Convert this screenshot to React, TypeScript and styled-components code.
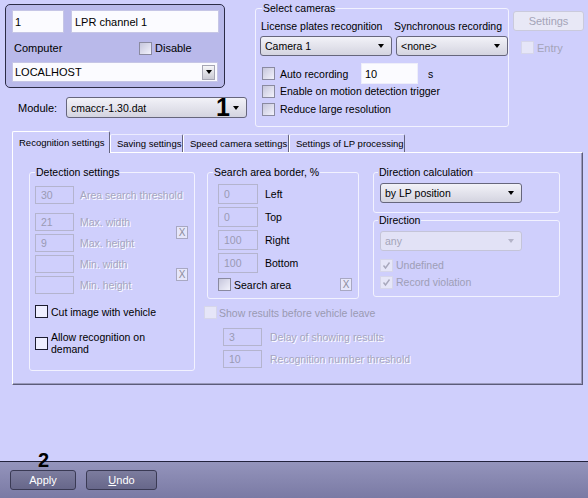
import React from "react";
import styled, { createGlobalStyle } from "styled-components";

const GlobalStyle = createGlobalStyle`
  html, body { margin: 0; padding: 0; }
  body {
    background: #cfcffc;
    font-family: "Liberation Sans", Arial, sans-serif;
    font-size: 10.5px;
    color: #000;
  }
`;

const Page = styled.div`
  width: 588px;
  height: 498px;
  display: flex;
  flex-direction: column;
  background: #cfcffc;
  overflow: hidden;
`;

const TopArea = styled.div`
  display: flex;
  height: 128px;
  flex-shrink: 0;
`;

const LeftCol = styled.div`
  width: 250px;
  box-sizing: border-box;
  padding: 4px 0 0 5px;
  display: flex;
  flex-direction: column;
`;

const IdentityPanel = styled.div`
  width: 220px;
  height: 84px;
  box-sizing: border-box;
  border: 1px solid #2c2c46;
  border-radius: 5px;
  background: #b9b9ea;
  padding: 5px 6px 0 6px;
  display: flex;
  flex-direction: column;
`;

const Row = styled.div<{ $mt?: number; $h?: number; $pl?: number; $gap?: number }>`
  display: flex;
  align-items: center;
  margin-top: ${(p) => p.$mt ?? 0}px;
  ${(p) => (p.$h ? `height: ${p.$h}px;` : "")}
  padding-left: ${(p) => p.$pl ?? 0}px;
  gap: ${(p) => p.$gap ?? 0}px;
`;

const TextField = styled.div<{ $w: number; $h: number; $pl?: number; $border?: string }>`
  width: ${(p) => p.$w}px;
  height: ${(p) => p.$h}px;
  box-sizing: border-box;
  background: #fbfbff;
  border: 1px solid ${(p) => p.$border ?? "#c6c6e6"};
  padding-left: ${(p) => p.$pl ?? 3}px;
  font-size: 11px;
  display: flex;
  align-items: center;
  flex-shrink: 0;
`;

const Label = styled.span<{ $w?: number; $ml?: number; $color?: string; $size?: number }>`
  ${(p) => (p.$w ? `width: ${p.$w}px; flex-shrink: 0;` : "")}
  margin-left: ${(p) => p.$ml ?? 0}px;
  color: ${(p) => p.$color ?? "#000"};
  font-size: ${(p) => p.$size ?? 10.5}px;
  white-space: nowrap;
  line-height: 12px;
`;

const DisabledLabel = styled.span<{ $ml?: number }>`
  margin-left: ${(p) => p.$ml ?? 6}px;
  color: #a6a6c0;
  text-shadow: 1px 1px 0 #ffffff;
  white-space: nowrap;
  line-height: 12px;
`;

const WrapLabel = styled.span`
  margin-left: 3px;
  line-height: 12px;
`;

const ClassicCombo = styled.div`
  width: 206px;
  height: 20px;
  box-sizing: border-box;
  background: #fbfbff;
  border: 1px solid #c6c6e6;
  display: flex;
  align-items: center;
  padding: 0 2px 0 2px;
  font-size: 11px;
`;

const ClassicDropButton = styled.div`
  margin-left: auto;
  width: 13px;
  height: 15px;
  box-sizing: border-box;
  border: 1px solid #a6a6b4;
  background: linear-gradient(#f6f6f8, #cacad4);
  display: flex;
  align-items: center;
  justify-content: center;
`;

const Arrow = styled.span<{ $color?: string }>`
  width: 0;
  height: 0;
  border-left: 3.5px solid transparent;
  border-right: 3.5px solid transparent;
  border-top: 4px solid ${(p) => p.$color ?? "#000"};
  flex-shrink: 0;
`;

const Combo = styled.div<{ $w: number; $h?: number; $disabled?: boolean }>`
  width: ${(p) => p.$w}px;
  height: ${(p) => p.$h ?? 20}px;
  box-sizing: border-box;
  border: 1px solid ${(p) => (p.$disabled ? "#c4c4d8" : "#66667c")};
  border-radius: 3px;
  background: ${(p) =>
    p.$disabled ? "#e2e2f6" : "linear-gradient(#f2f2f8, #d4d4e0)"};
  color: ${(p) => (p.$disabled ? "#a4a4b8" : "#000")};
  display: flex;
  align-items: center;
  padding: 0 7px 0 4px;
  font-size: 10.5px;
  flex-shrink: 0;
  overflow: visible;
`;

const ComboText = styled.span`
  flex: 1;
  white-space: nowrap;
`;

const BigMark = styled.span`
  font-weight: bold;
  font-size: 25px;
  line-height: 19px;
  margin-right: 3px;
`;

const Check = styled.span<{ $variant: "dark" | "gray" | "off" }>`
  width: 13px;
  height: 13px;
  box-sizing: border-box;
  flex-shrink: 0;
  display: inline-flex;
  align-items: center;
  justify-content: center;
  border: 1px solid
    ${(p) => (p.$variant === "dark" ? "#1c1c30" : p.$variant === "gray" ? "#8a8aa0" : "#d6d6ea")};
  background: ${(p) =>
    p.$variant === "dark"
      ? "#eeeeff"
      : p.$variant === "gray"
      ? "linear-gradient(135deg, #c6c6dc, #f2f2fc)"
      : "#e6e6f8"};
`;

const Fieldset = styled.fieldset<{
  $w: number;
  $pl: number;
  $pr?: number;
  $pb?: number;
  $h?: number;
  $mt?: number;
  $ml?: number;
}>`
  box-sizing: border-box;
  width: ${(p) => p.$w}px;
  ${(p) => (p.$h ? `height: ${p.$h}px;` : "")}
  margin: ${(p) => p.$mt ?? 0}px 0 0 ${(p) => p.$ml ?? 0}px;
  padding: 0 ${(p) => p.$pr ?? 4}px ${(p) => p.$pb ?? 6}px ${(p) => p.$pl}px;
  border: 1px solid #f2f2ff;
  border-radius: 3px;
  min-width: 0;
  display: flex;
  flex-direction: column;
  flex-shrink: 0;
`;

const Legend = styled.legend<{ $ml?: number }>`
  padding: 0 1px;
  margin-left: ${(p) => p.$ml ?? 0}px;
  font-size: 10.5px;
  line-height: 12px;
`;

const CameraGrid = styled.div<{ $mt: number }>`
  display: grid;
  grid-template-columns: 132px 112px;
  column-gap: 4px;
  margin-top: ${(p) => p.$mt}px;
`;

const GridLabel = styled.span<{ $ml: number }>`
  margin-left: ${(p) => p.$ml}px;
  white-space: nowrap;
  line-height: 12px;
`;

const RightCol = styled.div`
  margin-left: 4px;
  display: flex;
  flex-direction: column;
`;

const FlatButton = styled.div`
  margin-top: 11px;
  width: 71px;
  height: 20px;
  box-sizing: border-box;
  border: 1px solid #cacadc;
  border-radius: 3px;
  background: #e8e8f6;
  color: #a4a4b8;
  font-size: 11px;
  display: flex;
  align-items: center;
  justify-content: center;
`;

const TabsArea = styled.div`
  padding-left: 12px;
  margin-right: 5px;
  display: flex;
  flex-direction: column;
`;

const TabStrip = styled.div`
  display: flex;
  align-items: flex-end;
  height: 24px;
  position: relative;
  z-index: 1;
`;

const Tab = styled.div<{ $active?: boolean; $w: number }>`
  box-sizing: border-box;
  width: ${(p) => p.$w}px;
  height: ${(p) => (p.$active ? 22 : 18)}px;
  margin-bottom: ${(p) => (p.$active ? -1 : 0)}px;
  padding: 0 0 0 6px;
  display: flex;
  align-items: center;
  font-size: 9.5px;
  white-space: nowrap;
  background: #cfcffc;
  border-top: 1px solid ${(p) => (p.$active ? "#ffffff" : "#ececff")};
  border-left: 1px solid #ffffff;
  border-right: 1px solid #64647e;
  border-radius: 2px 2px 0 0;
`;

const TabPanel = styled.div`
  height: 233px;
  box-sizing: border-box;
  border-top: 1px solid #ffffff;
  border-left: 1px solid #ffffff;
  border-right: 1px solid #5c5c7a;
  border-bottom: 1px solid #5c5c7a;
  box-shadow: inset -1px -1px 0 #9a9abb;
  padding: 13px 0 0 16px;
  display: flex;
  align-items: flex-start;
`;

const DisInput = styled.div<{ $w?: number; $h?: number }>`
  width: ${(p) => p.$w ?? 39}px;
  height: ${(p) => p.$h ?? 18}px;
  box-sizing: border-box;
  border: 1px solid #b4b4ce;
  padding-left: 5px;
  color: #9a9ab4;
  display: flex;
  align-items: center;
  flex-shrink: 0;
`;

const XButton = styled.div`
  margin-left: auto;
  width: 12px;
  height: 13px;
  box-sizing: border-box;
  border: 1px solid #a8a8c2;
  background: #e6e6fa;
  color: #8c8c9c;
  font-size: 10px;
  display: flex;
  align-items: center;
  justify-content: center;
  flex-shrink: 0;
`;

const Stack = styled.div<{ $gap: number; $mt?: number; $ml?: number }>`
  display: flex;
  flex-direction: column;
  gap: ${(p) => p.$gap}px;
  margin-top: ${(p) => p.$mt ?? 0}px;
  margin-left: ${(p) => p.$ml ?? 0}px;
`;

const PairGroup = styled.div<{ $mt: number }>`
  display: flex;
  align-items: center;
  margin-top: ${(p) => p.$mt}px;
`;

const RightArea = styled.div`
  margin-left: 12px;
  display: flex;
  flex-direction: column;
`;

const TopRow = styled.div`
  display: flex;
  align-items: flex-start;
`;

const DirectionCol = styled.div`
  margin-left: 14px;
  width: 187px;
  display: flex;
  flex-direction: column;
`;

const ShowResults = styled.div`
  margin: 7px 0 0 -3px;
  display: flex;
  flex-direction: column;
`;

const Spacer = styled.div`
  flex: 1;
`;

const BottomBar = styled.div`
  height: 37px;
  flex-shrink: 0;
  box-sizing: border-box;
  border-top: 1px solid #22223c;
  background: linear-gradient(#9494bc, #7a7aa4);
  display: flex;
  align-items: flex-start;
  padding: 8px 0 0 10px;
  gap: 10px;
  position: relative;
`;

const BarButton = styled.div<{ $w: number }>`
  width: ${(p) => p.$w}px;
  height: 20px;
  box-sizing: border-box;
  border: 1px solid #3a3a54;
  border-radius: 3px;
  background: linear-gradient(#7c7c9e, #67678a);
  color: #ffffff;
  font-size: 11px;
  display: flex;
  align-items: center;
  justify-content: center;
`;

const Annotation = styled.span`
  position: absolute;
  left: 38px;
  top: -11px;
  font-weight: bold;
  font-size: 20px;
  line-height: 18px;
  color: #000;
`;

const CheckMark = ({ color = "#a8a8bc" }: { color?: string }) => (
  <svg width="9" height="9" viewBox="0 0 9 9">
    <path d="M1.5 4.5 L3.5 7 L7.5 1.5" stroke={color} strokeWidth="1.4" fill="none" />
  </svg>
);

const searchRows = [
  { v: "0", l: "Left" },
  { v: "0", l: "Top" },
  { v: "100", l: "Right" },
  { v: "100", l: "Bottom" },
];

export default function App() {
  return (
    <>
      <GlobalStyle />
      <Page>
        <TopArea>
          <LeftCol>
            <IdentityPanel>
              <Row $gap={7}>
                <TextField $w={52} $h={23} $pl={2}>1</TextField>
                <TextField $w={148} $h={23} $pl={3}>LPR channel 1</TextField>
              </Row>
              <Row $mt={9} $h={12} $pl={2}>
                <Label $w={125} $size={11}>Computer</Label>
                <Check $variant="gray" />
                <Label $ml={3} $size={11}>Disable</Label>
              </Row>
              <Row $mt={8}>
                <ClassicCombo>
                  <ComboText>LOCALHOST</ComboText>
                  <ClassicDropButton>
                    <Arrow />
                  </ClassicDropButton>
                </ClassicCombo>
              </Row>
            </IdentityPanel>
            <Row $mt={9} $pl={13}>
              <Label $w={48} $size={11}>Module:</Label>
              <Combo $w={181} $h={21}>
                <ComboText>cmaccr-1.30.dat</ComboText>
                <BigMark>1</BigMark>
                <Arrow />
              </Combo>
            </Row>
          </LeftCol>

          <Fieldset $w={254} $h={125} $pl={4} $mt={2} $ml={5}>
            <Legend $ml={2}>Select cameras</Legend>
            <CameraGrid $mt={6}>
              <GridLabel $ml={1}>License plates recognition</GridLabel>
              <GridLabel $ml={-2}>Synchronous recording</GridLabel>
            </CameraGrid>
            <CameraGrid $mt={4}>
              <Combo $w={132}>
                <ComboText>Camera 1</ComboText>
                <Arrow />
              </Combo>
              <Combo $w={112}>
                <ComboText>&lt;none&gt;</ComboText>
                <Arrow />
              </Combo>
            </CameraGrid>
            <Row $mt={7} $h={21} $pl={2}>
              <Check $variant="gray" />
              <Label $w={81} $ml={5}>Auto recording</Label>
              <TextField $w={57} $h={21} $pl={3} $border="#eeeefa">10</TextField>
              <Label $ml={10}>s</Label>
            </Row>
            <Row $h={14} $pl={2}>
              <Check $variant="gray" />
              <Label $ml={5}>Enable on motion detection trigger</Label>
            </Row>
            <Row $mt={4} $h={14} $pl={2}>
              <Check $variant="gray" />
              <Label $ml={5}>Reduce large resolution</Label>
            </Row>
          </Fieldset>

          <RightCol>
            <FlatButton>Settings</FlatButton>
            <Row $mt={10} $pl={8}>
              <Check $variant="off" />
              <Label $ml={3} $color="#a4a4b8" $size={11}>Entry</Label>
            </Row>
          </RightCol>
        </TopArea>

        <TabsArea>
          <TabStrip>
            <Tab $active $w={98}>Recognition settings</Tab>
            <Tab $w={73}>Saving settings</Tab>
            <Tab $w={106}>Speed camera settings</Tab>
            <Tab $w={116}>Settings of LP processing</Tab>
          </TabStrip>
          <TabPanel>
            <Fieldset $w={166} $h={205} $pl={5} $pr={6}>
              <Legend>Detection settings</Legend>
              <Row $mt={8}>
                <DisInput>30</DisInput>
                <DisabledLabel>Area search threshold</DisabledLabel>
              </Row>
              <PairGroup $mt={9}>
                <Stack $gap={3}>
                  <Row>
                    <DisInput>21</DisInput>
                    <DisabledLabel>Max. width</DisabledLabel>
                  </Row>
                  <Row>
                    <DisInput>9</DisInput>
                    <DisabledLabel>Max. height</DisabledLabel>
                  </Row>
                </Stack>
                <XButton>X</XButton>
              </PairGroup>
              <PairGroup $mt={3}>
                <Stack $gap={3}>
                  <Row>
                    <DisInput />
                    <DisabledLabel>Min. width</DisabledLabel>
                  </Row>
                  <Row>
                    <DisInput />
                    <DisabledLabel>Min. height</DisabledLabel>
                  </Row>
                </Stack>
                <XButton>X</XButton>
              </PairGroup>
              <Row $mt={11} $h={13}>
                <Check $variant="dark" />
                <Label $ml={3}>Cut image with vehicle</Label>
              </Row>
              <Row $mt={13}>
                <Check $variant="dark" />
                <WrapLabel>
                  Allow recognition on
                  <br />
                  demand
                </WrapLabel>
              </Row>
            </Fieldset>

            <RightArea>
              <TopRow>
                <Fieldset $w={152} $pl={10} $pr={6} $pb={7}>
                  <Legend $ml={-5}>Search area border, %</Legend>
                  <Stack $gap={3} $mt={6}>
                    {searchRows.map((r) => (
                      <Row key={r.l}>
                        <DisInput $w={40} $h={20}>{r.v}</DisInput>
                        <Label $ml={7}>{r.l}</Label>
                      </Row>
                    ))}
                  </Stack>
                  <Row $mt={5}>
                    <Check $variant="gray" />
                    <Label $ml={3}>Search area</Label>
                    <XButton>X</XButton>
                  </Row>
                </Fieldset>

                <DirectionCol>
                  <Fieldset $w={187} $pl={6} $pb={9}>
                    <Legend $ml={-2}>Direction calculation</Legend>
                    <Row $mt={5}>
                      <Combo $w={142}>
                        <ComboText>by LP position</ComboText>
                        <Arrow />
                      </Combo>
                    </Row>
                  </Fieldset>
                  <Fieldset $w={187} $pl={6} $pb={6} $mt={1}>
                    <Legend $ml={-2}>Direction</Legend>
                    <Row $mt={5}>
                      <Combo $w={142} $disabled>
                        <ComboText>any</ComboText>
                        <Arrow $color="#b4b4c8" />
                      </Combo>
                    </Row>
                    <Row $mt={6} $h={16}>
                      <Check $variant="off">
                        <CheckMark />
                      </Check>
                      <Label $ml={3} $color="#9e9eb6">Undefined</Label>
                    </Row>
                    <Row $mt={1} $h={16}>
                      <Check $variant="off">
                        <CheckMark />
                      </Check>
                      <Label $ml={3} $color="#9e9eb6">Record violation</Label>
                    </Row>
                  </Fieldset>
                </DirectionCol>
              </TopRow>

              <ShowResults>
                <Row $h={13}>
                  <Check $variant="off" />
                  <Label $ml={2} $color="#9a9ab2">Show results before vehicle leave</Label>
                </Row>
                <Stack $gap={4} $mt={9} $ml={19}>
                  <Row>
                    <DisInput>3</DisInput>
                    <DisabledLabel $ml={8}>Delay of showing results</DisabledLabel>
                  </Row>
                  <Row>
                    <DisInput>10</DisInput>
                    <DisabledLabel $ml={8}>Recognition number threshold</DisabledLabel>
                  </Row>
                </Stack>
              </ShowResults>
            </RightArea>
          </TabPanel>
        </TabsArea>

        <Spacer />

        <BottomBar>
          <Annotation>2</Annotation>
          <BarButton $w={66}>Apply</BarButton>
          <BarButton $w={71}>
            <span>
              <u>U</u>ndo
            </span>
          </BarButton>
        </BottomBar>
      </Page>
    </>
  );
}
